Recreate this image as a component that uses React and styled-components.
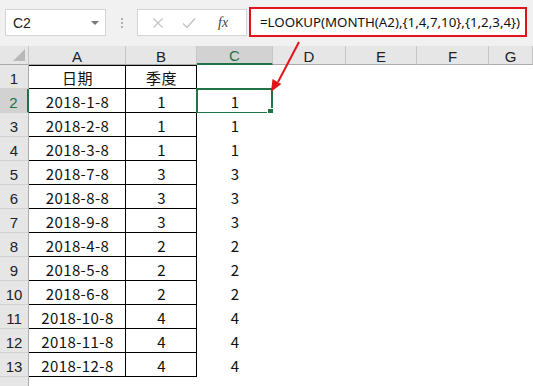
import React from "react";
import styled, { createGlobalStyle } from "styled-components";

const Global = createGlobalStyle`
  html, body { margin: 0; padding: 0; background: #ffffff; }
  body { font-family: "Noto Sans CJK SC", "Noto Sans", sans-serif; }
  * { box-sizing: border-box; }
`;

const Page = styled.div`
  width: 533px;
  height: 386px;
  overflow: hidden;
  position: relative;
  background: #fff;
`;

const Toolbar = styled.div`
  height: 46px;
  background: #f1f1f1;
  display: flex;
  align-items: flex-start;
  padding: 9px 0 0 5px;
`;

const NameBox = styled.div`
  width: 101px;
  height: 27px;
  background: #fff;
  border: 1px solid #d4d4d4;
  display: flex;
  align-items: center;
  justify-content: space-between;
  padding: 0 6px 0 7px;
  font-family: "Liberation Sans", Arial, sans-serif;
  font-size: 14px;
  color: #222;
`;

const Caret = styled.span`
  width: 0;
  height: 0;
  border-left: 4px solid transparent;
  border-right: 4px solid transparent;
  border-top: 4px solid #777;
`;

const Dots = styled.div`
  width: 31px;
  height: 27px;
  display: flex;
  flex-direction: column;
  align-items: center;
  justify-content: center;
  gap: 2px;
  & > span { width: 2px; height: 2px; background: #b0b0b0; display: block; }
`;

const FxBox = styled.div`
  width: 110px;
  height: 27px;
  background: #fff;
  border: 1px solid #d4d4d4;
  display: flex;
  align-items: center;
  padding: 0 0 0 14px;
  gap: 18px;
`;

const FxText = styled.span`
  font-family: "Liberation Serif", "Times New Roman", serif;
  font-style: italic;
  font-size: 14px;
  color: #444;
  margin-left: 4px;
`;

const FormulaBox = styled.div`
  margin-left: 2px;
  margin-top: -2px;
  width: 278px;
  height: 30px;
  background: #fff;
  border: 2px solid #e2141b;
  display: flex;
  align-items: center;
  padding-left: 9px;
  font-family: "Noto Sans", "Liberation Sans", sans-serif;
  font-size: 13.3px;
  color: #111;
  white-space: nowrap;
  overflow: hidden;
`;

const Sheet = styled.div`
  display: grid;
  grid-template-columns: 29px 97px 71px 76px 73px 71px 72px 44px;
  grid-template-rows: 19px repeat(13, 24px) 20px;
  position: relative;
`;

const Corner = styled.div`
  background: #e6e6e6;
  border-right: 1px solid #c6c6c6;
  border-bottom: 1px solid #ababab;
  position: relative;
  &::after {
    content: "";
    position: absolute;
    right: 3px;
    bottom: 3px;
    width: 0;
    height: 0;
    border-left: 12px solid transparent;
    border-bottom: 12px solid #b8b8b8;
  }
`;

const ColHead = styled.div`
  background: ${(p) => (p.$active ? "#d2d2d2" : "#e6e6e6")};
  border-right: 1px solid #c6c6c6;
  border-bottom: ${(p) => (p.$active ? "2px solid #217346" : "1px solid #ababab")};
  color: ${(p) => (p.$active ? "#217346" : "#222")};
  font-family: "Liberation Sans", Arial, sans-serif;
  font-size: 15px;
  display: flex;
  align-items: center;
  justify-content: center;
  padding-top: 2px;
`;

const RowHead = styled.div`
  background: ${(p) => (p.$active ? "#d2d2d2" : "#e6e6e6")};
  border-right: ${(p) => (p.$active ? "2px solid #217346" : "1px solid #ababab")};
  border-bottom: 1px solid #d0d0d0;
  color: ${(p) => (p.$active ? "#217346" : "#222")};
  font-family: "Liberation Sans", Arial, sans-serif;
  font-size: 15px;
  display: flex;
  align-items: flex-end;
  justify-content: center;
  padding: 0 0 1px 0;
`;

const Cell = styled.div`
  position: relative;
  display: flex;
  align-items: center;
  justify-content: center;
  font-family: "Noto Sans CJK SC", "Noto Sans", sans-serif;
  font-size: 15px;
  letter-spacing: 0.4px;
  color: #111;
  background: #fff;
  box-shadow: ${(p) =>
    p.$bordered
      ? p.$first
        ? "inset -1px -1px 0 #000, inset 0 1px 0 #000"
        : "inset -1px -1px 0 #000"
      : "none"};
`;

const Selection = styled.div`
  position: absolute;
  left: -1px;
  top: -1px;
  right: 0;
  bottom: -1px;
  border: 2px solid #217346;
  pointer-events: none;
  &::after {
    content: "";
    position: absolute;
    right: -4px;
    bottom: -4px;
    width: 6px;
    height: 6px;
    background: #217346;
    border: 1px solid #fff;
  }
`;

const Arrow = styled.svg`
  position: absolute;
  left: 0;
  top: 0;
  pointer-events: none;
`;

const rows = [
  ["2018-1-8", "1"],
  ["2018-2-8", "1"],
  ["2018-3-8", "1"],
  ["2018-7-8", "3"],
  ["2018-8-8", "3"],
  ["2018-9-8", "3"],
  ["2018-4-8", "2"],
  ["2018-5-8", "2"],
  ["2018-6-8", "2"],
  ["2018-10-8", "4"],
  ["2018-11-8", "4"],
  ["2018-12-8", "4"],
];

const cols = ["A", "B", "C", "D", "E", "F", "G"];

export default function App() {
  return (
    <>
      <Global />
      <Page>
        <Toolbar>
          <NameBox>
            <span>C2</span>
            <Caret />
          </NameBox>
          <Dots>
            <span />
            <span />
            <span />
          </Dots>
          <FxBox>
            <svg width="12" height="12" viewBox="0 0 12 12">
              <path d="M1.5 1.5 L10.5 10.5 M10.5 1.5 L1.5 10.5" stroke="#c4c4c4" strokeWidth="1.3" fill="none" />
            </svg>
            <svg width="14" height="12" viewBox="0 0 14 12">
              <path d="M1 6.5 L5 10.5 L13 1.5" stroke="#c4c4c4" strokeWidth="1.5" fill="none" />
            </svg>
            <FxText>fx</FxText>
          </FxBox>
          <FormulaBox>=LOOKUP(MONTH(A2),&#123;1,4,7,10&#125;,&#123;1,2,3,4&#125;)</FormulaBox>
        </Toolbar>
        <Sheet>
          <Corner />
          {cols.map((c, i) => (
            <ColHead key={i} $active={c === "C"}>
              {c}
            </ColHead>
          ))}
          <RowHead>1</RowHead>
          <Cell $bordered $first>日期</Cell>
          <Cell $bordered $first>季度</Cell>
          {[0, 1, 2, 3, 4].map((k) => (
            <Cell key={k} />
          ))}
          {rows.map((r, i) => (
            <React.Fragment key={i}>
              <RowHead $active={i === 0}>{i + 2}</RowHead>
              <Cell $bordered>{r[0]}</Cell>
              <Cell $bordered>{r[1]}</Cell>
              <Cell>
                {r[1]}
                {i === 0 && <Selection />}
              </Cell>
              {[0, 1, 2, 3].map((k) => (
                <Cell key={k} />
              ))}
            </React.Fragment>
          ))}
          <RowHead />
          {[0, 1, 2, 3, 4, 5, 6].map((k) => (
            <Cell key={k} />
          ))}
        </Sheet>
        <Arrow width="533" height="386" viewBox="0 0 533 386">
          <line x1="299" y1="42" x2="278" y2="82" stroke="#e2141b" strokeWidth="2" />
          <polygon points="271,92 272.5,79 281.3,84" fill="#e2141b" />
        </Arrow>
      </Page>
    </>
  );
}
